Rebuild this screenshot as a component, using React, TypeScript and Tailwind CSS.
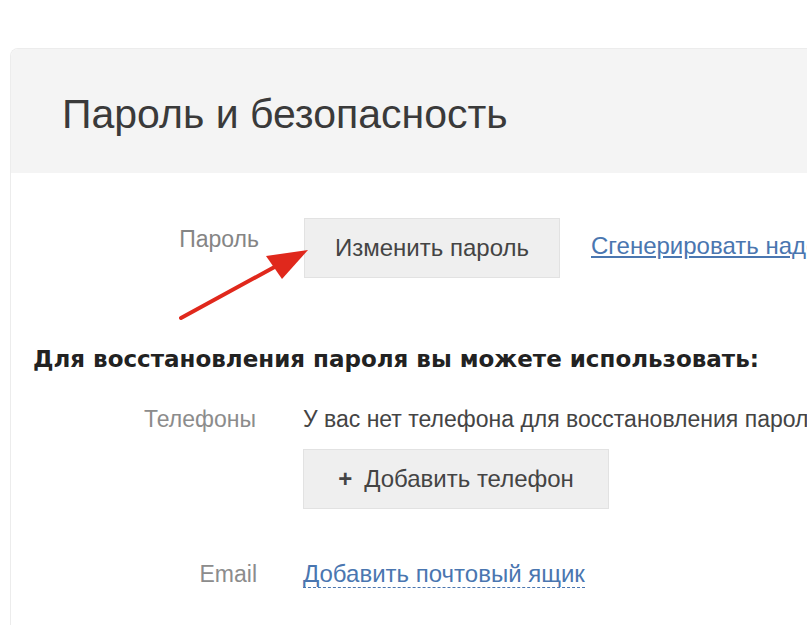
export default function App() {
  const font = { fontFamily: '"Liberation Sans", Arial, sans-serif' }

  return (
    <div className="w-[807px] h-[625px] bg-white overflow-hidden relative" style={font}>
      <div className="pt-[48px] pl-[10px]">
        <div className="border-l border-t border-[#ececec] rounded-tl-[8px] h-[620px] overflow-hidden">
          <div className="bg-[#f4f4f4] h-[124px] pl-[51px] pt-[45px]">
            <h1 className="text-[41px] leading-none text-[#3a3a3a] whitespace-nowrap">
              Пароль и безопасность
            </h1>
          </div>

          <div className="bg-white pt-[45px]">
            <div className="flex items-start">
              <div className="shrink-0 w-[248px] text-right text-[23px] leading-[28px] text-[#858585] mt-[7px]">Пароль</div>
              <div className="shrink-0 ml-[45px] w-[256px] h-[60px] bg-[#efefef] border border-[#e2e2e2] flex items-center justify-center text-[24px] text-[#444] whitespace-nowrap">
                Изменить пароль
              </div>
              <a className="shrink-0 ml-[31px] mt-[14px] text-[24px] leading-[28px] text-[#4a76b0] underline whitespace-nowrap">
                Сгенерировать надёжный пароль
              </a>
            </div>

            <div
              className="mt-[67px] pl-[22px] text-[23px] leading-[28px] font-bold text-[#222] whitespace-nowrap"
              style={{ fontFamily: '"DejaVu Sans", Verdana, sans-serif' }}
            >
              Для восстановления пароля вы можете использовать:
            </div>

            <div className="flex items-start mt-[32px]">
              <div className="shrink-0 w-[245px] text-right text-[23px] leading-[28px] text-[#8c8c8c]">Телефоны</div>
              <div className="shrink-0 ml-[47px]">
                <div className="text-[23px] leading-[28px] text-[#444] whitespace-nowrap">
                  У вас нет телефона для восстановления пароля
                </div>
                <div className="mt-[16px] w-[306px] h-[60px] bg-[#efefef] border border-[#e2e2e2] flex items-center justify-center text-[24px] text-[#444]">
                  <span className="mr-[12px] font-bold">+</span>Добавить телефон
                </div>
              </div>
            </div>

            <div className="flex items-start mt-[51px]">
              <div className="shrink-0 w-[246px] text-right text-[23px] leading-[28px] text-[#8c8c8c]">Email</div>
              <a className="shrink-0 ml-[46px] text-[24px] leading-[27px] text-[#4a76b0] border-b border-dashed border-[#4a76b0] whitespace-nowrap">
                Добавить почтовый ящик
              </a>
            </div>
          </div>
        </div>
      </div>

      <svg className="absolute left-0 top-0 pointer-events-none" width="807" height="625">
        <line x1="181" y1="318" x2="280" y2="264" stroke="#e0281c" strokeWidth="4" strokeLinecap="round" />
        <polygon points="308,250 266,256 282,279" fill="#e0281c" />
      </svg>
    </div>
  )
}
